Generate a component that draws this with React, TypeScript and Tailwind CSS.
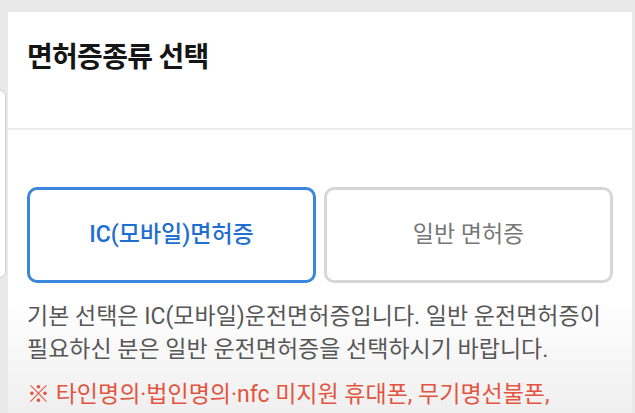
const FONT = "font-['Roboto','Noto_Sans_CJK_KR',sans-serif]";

function LicenseOption({ label, selected }: { label: string; selected?: boolean }) {
  return (
    <button
      type="button"
      className={
        selected
          ? "flex h-[96px] items-center justify-center rounded-[10px] border-[3px] border-[#3c87dc] bg-white text-[23px] font-medium text-[#1f6fd1]"
          : "flex h-[96px] items-center justify-center rounded-[10px] border-[3px] border-[#d6d6d6] bg-white text-[23px] text-[#777777]"
      }
    >
      {label}
    </button>
  );
}

export default function App() {
  return (
    <div className={`relative h-[413px] w-[635px] overflow-hidden bg-[#e9e9e9] pl-2 pt-3 ${FONT}`}>
      {/* edge of the panel behind the sheet */}
      <div className="absolute left-0 top-[90px] h-[188px] w-[6px] rounded-r-md border border-l-0 border-[#cfcfcf] bg-white" />

      <div className="flex h-full w-[624px] flex-col bg-white">
        <div className="h-[118px] shrink-0 border-b-2 border-[#ececec] px-[19px] pt-[25px]">
          <h2 className="text-[28px] font-bold tracking-tight text-[#151515]">면허증종류 선택</h2>
        </div>

        <div className="flex-1 bg-gradient-to-b from-white from-60% to-[#efefef] px-[19px] pt-[57px]">
          <div className="grid grid-cols-2 gap-2">
            <LicenseOption label="IC(모바일)면허증" selected />
            <LicenseOption label="일반 면허증" />
          </div>

          <p className="mt-[17px] text-[23px] leading-[33px] text-[#575757]">
            기본 선택은 IC(모바일)운전면허증입니다. 일반 운전면허증이
            <br />
            필요하신 분은 일반 운전면허증을 선택하시기 바랍니다.
          </p>
          <p className="mt-[12px] text-[23px] leading-[33px] text-[#e3543f]">
            ※ 타인명의·법인명의·nfc 미지원 휴대폰, 무기명선불폰,
          </p>
        </div>
      </div>
    </div>
  );
}
